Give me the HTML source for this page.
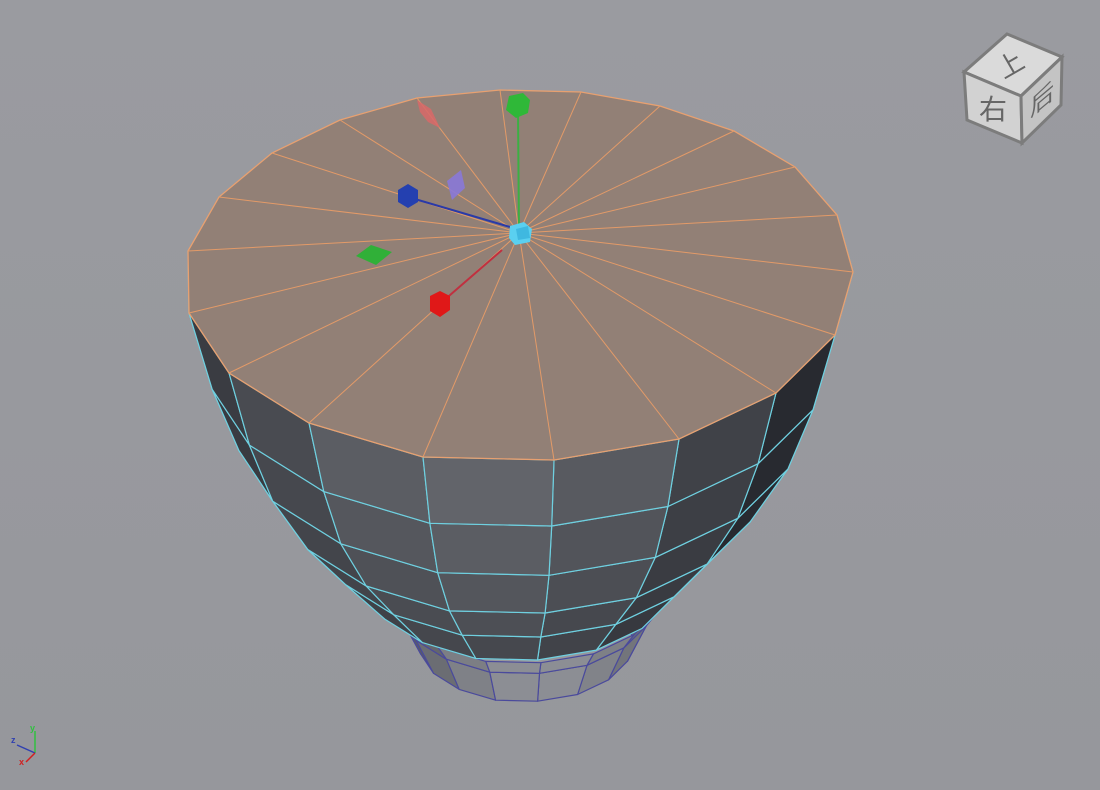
<!DOCTYPE html>
<html><head><meta charset="utf-8"><style>
html,body{margin:0;padding:0;background:#999a9f;}
svg{display:block}
</style></head><body>
<svg id="s" width="1100" height="790" viewBox="0 0 1100 790" xmlns="http://www.w3.org/2000/svg">
<defs>
<linearGradient id="bg" x1="0" y1="0" x2="0" y2="1"><stop offset="0" stop-color="#9a9ba0"/><stop offset="1" stop-color="#96979c"/></linearGradient>
</defs>
<rect width="1100" height="790" fill="url(#bg)"/>
<g id="foot"></g>
<g id="body"></g>
<g id="topface"></g>
<g id="giz">
  <line x1="519" y1="233" x2="518" y2="108" stroke="#3cb043" stroke-width="2"/>
  <line x1="510" y1="227" x2="408" y2="197" stroke="#2a3aa8" stroke-width="2"/>
  <line x1="502" y1="250" x2="442" y2="302" stroke="#c03040" stroke-width="2"/>
  <polygon points="509,96 523,93 530,100 528,113 516,118 506,110" fill="#2fb838"/>
  <polygon points="398,190 408,184 418,190 418,202 408,208 398,202" fill="#2440b0"/>
  <polygon points="430,296 440,291 450,296 450,310 440,317 430,311" fill="#e01818"/>
  <polygon points="417,100 431,109 440,128 428,122 420,112" fill="#d86868" opacity="0.85"/>
  <polygon points="447,181 461,170 465,188 452,200" fill="#8a78d8" opacity="0.9"/>
  <polygon points="356,256 371,245 392,252 376,265" fill="#30b038"/>
  <polygon points="510,226 524,222 532,229 530,242 515,245 509,238" fill="#5ad0f0"/>
  <polygon points="516,229 528,226 530,238 518,240" fill="#3fb8e0"/>
</g>
<g>
  <polygon points="964,72 1007,34 1062,57 1021,96" fill="#dadada" stroke="#7c7c7c" stroke-width="3"/>
  <polygon points="964,72 1021,96 1022,143 967,120" fill="#d2d2d2" stroke="#7c7c7c" stroke-width="3"/>
  <polygon points="1021,96 1062,57 1061,105 1022,143" fill="#c4c4c4" stroke="#7c7c7c" stroke-width="3"/>
  <text x="1010" y="74" font-family="'Noto Sans CJK SC',sans-serif" font-size="26" fill="#666" transform="rotate(-30 1010 64)" text-anchor="middle">上</text>
  <text x="993" y="119" font-family="'Noto Sans CJK SC',sans-serif" font-size="28" fill="#666" text-anchor="middle">右</text>
  <text x="1042" y="112" font-family="'Noto Sans CJK SC',sans-serif" font-size="24" fill="#666" text-anchor="middle" transform="skewY(-40) translate(0 870)">后</text>
</g>
<g font-family="'Liberation Sans',sans-serif" font-weight="bold" font-size="9">
  <line x1="35" y1="753" x2="35" y2="731" stroke="#30c040" stroke-width="1.5"/>
  <line x1="35" y1="753" x2="17" y2="745" stroke="#3040b0" stroke-width="1.5"/>
  <line x1="35" y1="753" x2="26" y2="762" stroke="#d02020" stroke-width="1.5"/>
  <text x="30" y="731" fill="#30c040">y</text>
  <text x="11" y="743" fill="#3040b0">z</text>
  <text x="19" y="765" fill="#d02020">x</text>
</g>
</svg>
<script>
var NS="http://www.w3.org/2000/svg";
function el(p,t,a){var e=document.createElementNS(NS,t);for(var k in a)e.setAttribute(k,a[k]);p.appendChild(e);return e;}
var rim=[[188,251],[219,197],[272,153],[340,120],[417,98],[500,90],[581,92],[660,106],[734,131],[795,167],[837,215],[853,272],[835,335],[776,393],[679,439],[554,460],[423,457],[309,423],[229,373],[189,313]];
var C0=[521,275];
function ring(s,cx,cy){return rim.map(function(v){return [cx+s*(v[0]-C0[0]),cy+s*(v[1]-C0[1])];});}
var rings=[rim,ring(0.93,521,354),ring(0.85,521,418),ring(0.73,521,478),ring(0.6,521,526),ring(0.47,522,573)];
function pts(a){return a.map(function(p){return p[0].toFixed(1)+","+p[1].toFixed(1)}).join(" ");}
function drawCyl(g,R,lineCol,shade){
  var n=R[0].length,quads=[];
  for(var i=0;i<R.length-1;i++)for(var j=0;j<n;j++){
    var k=(j+1)%n,a=R[i][j],b=R[i][k],c=R[i+1][k],d=R[i+1][j];
    var mx=(a[0]+b[0])/2;
    quads.push({p:[a,b,c,d],z:(a[1]+b[1])/2-(R[i][0][1]+R[i][11][1])/2,mx:mx,i:i});
  }
  quads=quads.filter(function(q){return q.z>-30;});
  quads.sort(function(a,b){return a.z-b.z;});
  quads.forEach(function(q){
    el(g,"polygon",{points:pts(q.p),fill:shade(q),stroke:lineCol,"stroke-width":1.2,"stroke-linejoin":"round"});
  });
}
drawCyl(document.getElementById("foot"),[ring(0.42,527,585),ring(0.38,527,603),ring(0.32,527,642)],"#4a4a9c",function(q){
  var t=Math.abs(q.mx-540)/130; var v=Math.round(150-50*t*t);return "rgb("+(v-8)+","+(v-6)+","+v+")";});
drawCyl(document.getElementById("body"),rings,"#6fd0e0",function(q){
  var t=(q.mx-480)/330; var v=Math.round(98-60*t*t-q.i*7);if(v<30)v=30;return "rgb("+v+","+(v+2)+","+(v+8)+")";});
var tf=document.getElementById("topface");
el(tf,"polygon",{points:pts(rim),fill:"#928076",stroke:"#e8a070","stroke-width":1.3});
var c=[519,233];
rim.forEach(function(v){el(tf,"line",{x1:c[0],y1:c[1],x2:v[0],y2:v[1],stroke:"#e39a68","stroke-width":1});});
var giz=document.getElementById("giz");giz.parentNode.appendChild(giz);
</script>
</body></html>
